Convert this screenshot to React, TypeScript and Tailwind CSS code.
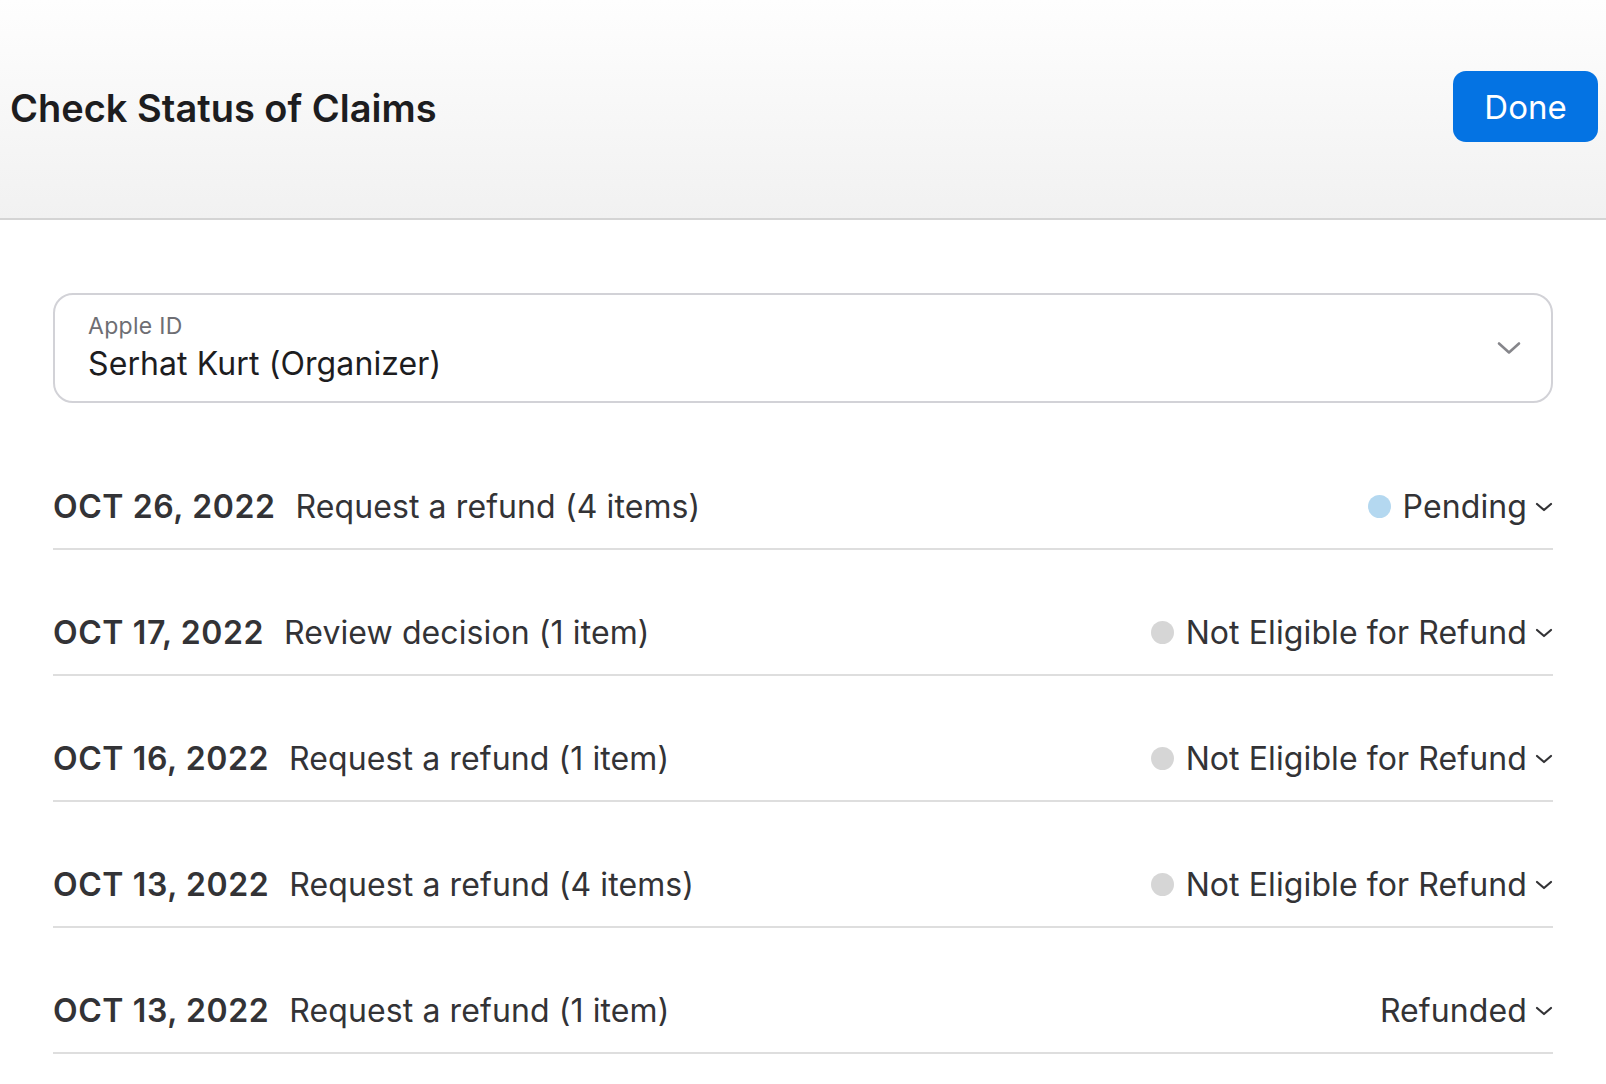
type Claim = {
  date: string;
  title: string;
  status: string;
  dot?: 'pending' | 'muted';
};

const claims: Claim[] = [
  { date: 'OCT 26, 2022', title: 'Request a refund (4 items)', status: 'Pending', dot: 'pending' },
  { date: 'OCT 17, 2022', title: 'Review decision (1 item)', status: 'Not Eligible for Refund', dot: 'muted' },
  { date: 'OCT 16, 2022', title: 'Request a refund (1 item)', status: 'Not Eligible for Refund', dot: 'muted' },
  { date: 'OCT 13, 2022', title: 'Request a refund (4 items)', status: 'Not Eligible for Refund', dot: 'muted' },
  { date: 'OCT 13, 2022', title: 'Request a refund (1 item)', status: 'Refunded' },
];

function SmallChevron() {
  return (
    <svg width="18" height="10" viewBox="0 0 18 10" fill="none" className="shrink-0">
      <path d="M2 2l7 6 7-6" stroke="#333336" strokeWidth="2.2" strokeLinecap="round" strokeLinejoin="round" />
    </svg>
  );
}

function SelectChevron() {
  return (
    <svg width="24" height="14" viewBox="0 0 24 14" fill="none" className="ml-auto shrink-0">
      <path d="M2 2.5l10 9 10-9" stroke="#86868b" strokeWidth="2.6" strokeLinecap="round" strokeLinejoin="round" />
    </svg>
  );
}

function ClaimRow({ claim }: { claim: Claim }) {
  return (
    <div className="flex h-[126px] items-center border-b-2 border-[#dedede] pt-[41px] text-[32px] tracking-[0.1px] text-[#333336]">
      <span className="font-semibold tracking-[0.6px]">{claim.date}</span>
      <span className="ml-[20px]">{claim.title}</span>
      <div className="ml-auto flex items-center">
        {claim.dot && (
          <span
            className={
              claim.dot === 'pending'
                ? 'mr-[12px] h-[23px] w-[23px] rounded-full bg-[#b4d8f0]'
                : 'mr-[12px] h-[23px] w-[23px] rounded-full bg-[#d6d6d6]'
            }
          />
        )}
        <span>{claim.status}</span>
        <span className="ml-[8px]">
          <SmallChevron />
        </span>
      </div>
    </div>
  );
}

export default function App() {
  return (
    <div className="min-h-screen bg-white font-['Inter',sans-serif] antialiased">
      <header className="flex h-[220px] items-center justify-between border-b-2 border-[#d4d4d4] bg-gradient-to-b from-[#fefefe] to-[#f1f1f1] pl-[10px] pr-[8px]">
        <h1 className="pb-[2px] text-[38px] font-semibold tracking-[0px] text-[#1d1d1f]">Check Status of Claims</h1>
        <button className="mb-[5px] h-[71px] w-[145px] rounded-[13px] bg-[#0473e3] pt-[3px] text-[33px] text-white">Done</button>
      </header>

      <main className="px-[53px] pt-[73px]">
        <div className="flex h-[110px] items-center rounded-[20px] border-2 border-[#d2d2d7] pl-[33px] pr-[30px]">
          <div className="flex flex-col gap-[6px]">
            <span className="text-[23px] leading-[26px] tracking-[0.3px] text-[#6e6e73]">Apple ID</span>
            <span className="text-[32px] leading-[38px] tracking-[0.1px] text-[#1d1d1f]">Serhat Kurt (Organizer)</span>
          </div>
          <SelectChevron />
        </div>

        <div className="mt-[21px]">
          {claims.map((c, i) => (
            <ClaimRow key={i} claim={c} />
          ))}
        </div>
      </main>
    </div>
  );
}
